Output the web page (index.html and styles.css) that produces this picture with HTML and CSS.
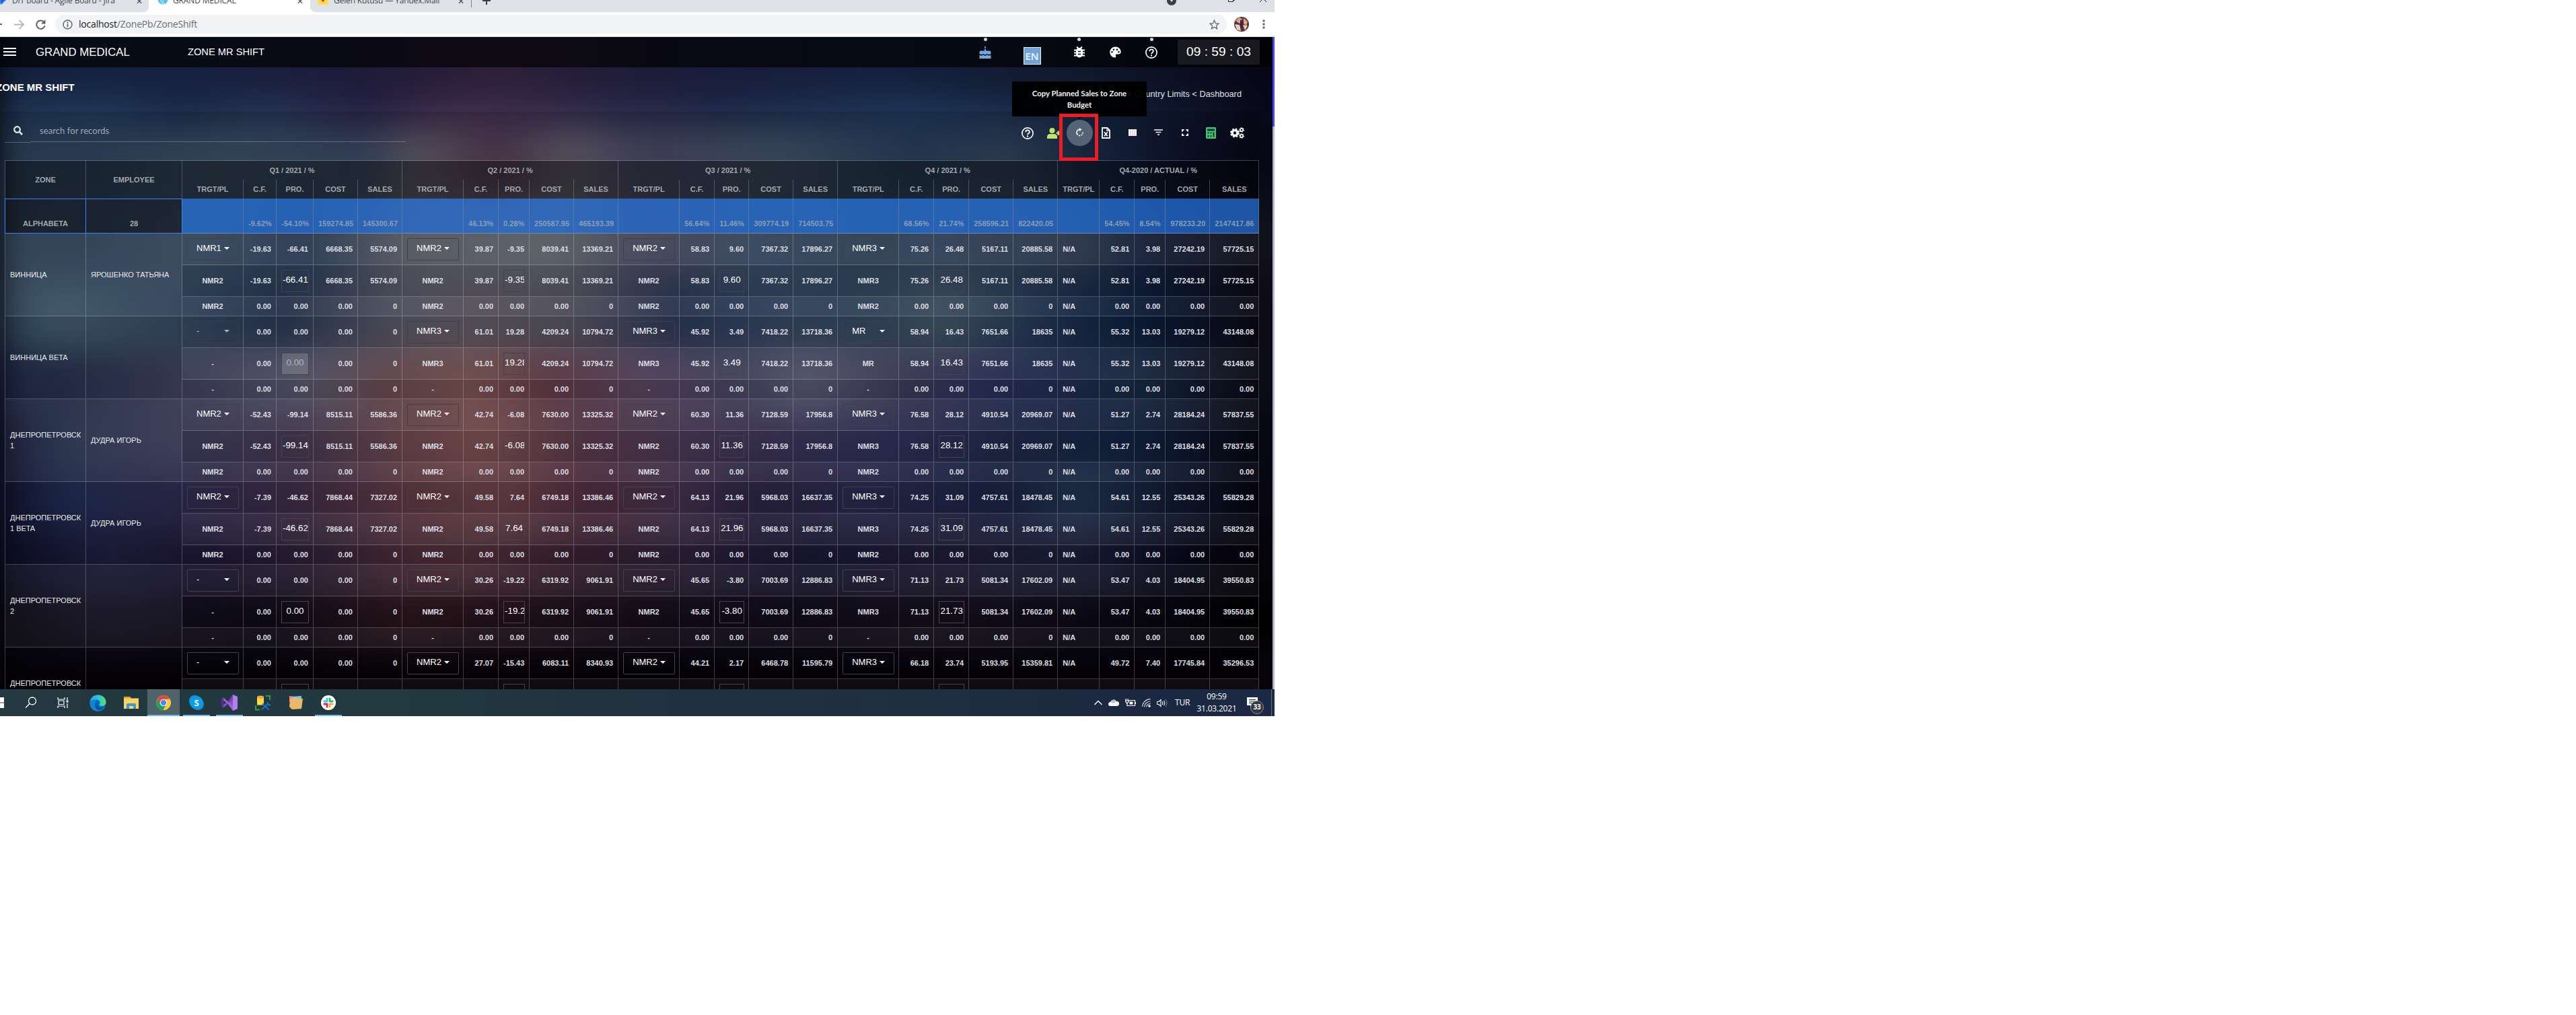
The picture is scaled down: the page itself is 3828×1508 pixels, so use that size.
FILE: index.html
```html
<!DOCTYPE html>
<html lang="ru">
<head>
<meta charset="utf-8">
<title>Grand Medical - Zone MR Shift</title>
<link rel="stylesheet" href="styles.css">
</head>
<body>
<div class="screen">
  <div class="tabs">
    <div class="tab tab-jira">
      <svg class="fav" viewBox="0 0 16 16"><path d="M8 0l8 8-8 8-8-8z" fill="#2f7cf6"/><path d="M8 3l5 5-5 5z" fill="#1d55c4"/></svg>
      <span class="tab-name">DIT board - Agile Board - Jira</span><span class="tab-x">✕</span>
    </div>
    <div class="tab tab-active">
      <svg class="fav" viewBox="0 0 16 16"><circle cx="8" cy="8" r="7.5" fill="#4fc3f7"/><path d="M4 2q-1 7 4 13M9 1q-3 7 1 14" stroke="#d5f2ff" fill="none"/></svg>
      <span class="tab-name">GRAND MEDICAL</span><span class="tab-x">✕</span>
    </div>
    <div class="tab tab-mail">
      <svg class="fav" viewBox="0 0 16 16"><path d="M0 0h16v16H0z" fill="#ffdb4d"/><path d="M4 7l4 5 4-5z" fill="#e8202a"/></svg>
      <span class="tab-name">Gelen Kutusu — Yandex.Mail</span><span class="tab-x">✕</span>
    </div>
    <div class="tab-new"><svg width="12" height="12" viewBox="0 0 12 12"><path d="M6 0v12M0 6h12" stroke="#3c4043" stroke-width="2"/></svg></div>
    <div class="win">
      <svg width="14" height="14" viewBox="0 0 14 14"><circle cx="7" cy="7" r="7" fill="#3c4043"/><path d="M4 5l3 4 3-4z" fill="#dee1e6"/></svg>
      <svg width="10" height="10" viewBox="0 0 10 10"><path d="M.5 2.500h7v7h-7zM2.500 2.500v-2h7v7h-2" fill="none" stroke="#222"/></svg>
      <svg width="10" height="10" viewBox="0 0 10 10"><path d="M0 0l10 10M10 0L0 10" stroke="#222"/></svg>
    </div>
  </div>
  <div class="addressbar">
    <span class="back"></span>
    <svg class="nav-fwd" width="15" height="15" viewBox="0 0 15 15"><path d="M0 7.500h13M7.500 1l6.500 6.500-6.500 6.500" fill="none" stroke="#b4b7ba" stroke-width="1.800"/></svg>
    <svg class="nav-reload" width="15" height="15" viewBox="0 0 15 15"><path d="M12.700 4.200A6.200 6.200 0 1 0 13.600 9" fill="none" stroke="#5f6368" stroke-width="2"/><path d="M14.500 0v6.500H8z" fill="#5f6368"/></svg>
    <div class="url">
      <svg width="15" height="15" viewBox="0 0 15 15"><circle cx="7.500" cy="7.500" r="6.500" fill="none" stroke="#5f6368" stroke-width="1.400"/><path d="M7.500 6.500v4.700M7.500 3.600v1.800" stroke="#5f6368" stroke-width="1.700"/></svg>
      <span class="url-text"><b>localhost</b>/ZonePb/ZoneShift</span>
      <svg class="star" width="15" height="15" viewBox="0 0 24 24"><path d="M12 2l3 7 7.500.700-5.700 5 1.700 7.300L12 18l-6.500 4 1.700-7.300-5.700-5L9 9z" fill="none" stroke="#5f6368" stroke-width="2"/></svg>
    </div>
    <svg class="avatar" width="22" height="22" viewBox="0 0 22 22"><circle cx="11" cy="11" r="11" fill="#5d3338"/><path d="M2 6l5-5 5 2-4 7zM14 2l6 5-2 6-4-3z" fill="#d9a68a"/><path d="M1 11l7 1 2 9-6-2zM13 12l7 1-4 7z" fill="#e6d2c0"/><path d="M9 4l4 4-1 10-3-6z" fill="#2b2c52"/></svg>
    <svg class="menu3" width="4" height="14" viewBox="0 0 4 14"><path d="M.5.500h3v3h-3zM.5 5.500h3v3h-3zM.5 10.500h3v3h-3z" fill="#5f6368"/></svg>
  </div>

  <div class="app">
    <div class="backdrop">
      <i class="b1"></i><i class="b2"></i><i class="b3"></i><i class="b4"></i><i class="b5"></i><i class="b6"></i><i class="b7"></i><i class="b8"></i><i class="b9"></i><i class="b10"></i><i class="b11"></i>
    </div>
    <header class="topbar">
      <span class="burger"></span>
      <span class="brand">GRAND MEDICAL</span>
      <span class="crumb-title">ZONE MR SHIFT</span>
      <div class="top-icons">
        <span class="ti w70 dot"><svg width="18" height="19" viewBox="0 0 18 19"><g fill="#76a7e0"><path d="M9 0q2 3 0 4.500Q7 3 9 0zM8 5h2v3H8zM2.500 7.500h13q2 0 2 2v2.500l-2.800 1.300L12 12l-3 1.500L6 12l-2.700 1.300L.500 12V9.500q0-2 2-2z"/><path d="M.500 13.700l2.800 1L6 13.500l3 1.500 3-1.500 2.700 1.200 2.800-1V19H.500z"/></g></svg></span>
        <span class="ti w69"><span class="lang">EN</span></span>
        <span class="ti w71 dot"><svg width="16" height="17" viewBox="0 0 16 17"><g stroke="#fff" stroke-width="2" fill="none"><path d="M0 5.500h16M0 9.500h16M0 13.500h16M4 .500l3 3M12 .500l-3 3"/></g><rect x="3" y="2" width="10" height="14.500" rx="5" fill="#fff"/><path d="M6 7.500h4M6 11.500h4" stroke="#080710" stroke-width="1.600"/></svg></span>
        <span class="ti w37"><svg width="17" height="17" viewBox="0 0 17 17"><path fill="#fff" fill-rule="evenodd" d="M8.500.500C4 .500.300 4 .300 8.500S4 16.500 7.500 16.500c2 0 2-1.500 1.500-2.500s0-2.500 1.500-2.500H13c2 0 3.700-1 3.700-3.500C16.700 4 13 .500 8.500.500zM3.500 9.500a1.300 1.300 0 1 1 0-2.600 1.300 1.300 0 0 1 0 2.600zm2.500-3.500a1.300 1.300 0 1 1 0-2.600 1.300 1.300 0 0 1 0 2.600zm5 0a1.300 1.300 0 1 1 0-2.600 1.300 1.300 0 0 1 0 2.600zm2.500 3.500a1.300 1.300 0 1 1 0-2.600 1.300 1.300 0 0 1 0 2.600z"/></svg></span>
        <span class="ti w70 dot"><svg width="18" height="18" viewBox="0 0 18 18"><circle cx="9" cy="9" r="8.100" fill="none" stroke="#fff" stroke-width="1.700"/><path d="M6.200 7.200c0-3.800 5.700-3.700 5.700-.200 0 2-2.900 2-2.900 4.300" fill="none" stroke="#fff" stroke-width="1.800"/><path d="M8 12.400h2v2H8z" fill="#fff"/></svg></span>
        <span class="clock">09 : 59 : 03</span>
      </div>
    </header>

    <div class="titleband">
      <h1>ZONE MR SHIFT</h1>
      <span class="crumbs">&lt; Country Limits &lt; Dashboard</span>
    </div>

    <main class="card">
      <div class="toolbar">
        <span class="s-icon"><svg width="14" height="14" viewBox="0 0 14 14"><circle cx="5.500" cy="5.500" r="4.300" fill="none" stroke="#e6e9ee" stroke-width="2.200"/><path d="M8.700 8.700l4.300 4.300" stroke="#e6e9ee" stroke-width="2.600"/></svg></span>
        <span class="s-field">search for records</span>
        <div class="tools">
          <span><svg width="18" height="18" viewBox="0 0 18 18"><circle cx="9" cy="9" r="8.100" fill="none" stroke="#fff" stroke-width="1.700"/><path d="M6.200 7.200c0-3.800 5.700-3.700 5.700-.200 0 2-2.900 2-2.900 4.300" fill="none" stroke="#fff" stroke-width="1.800"/><path d="M8 12.400h2v2H8z" fill="#fff"/></svg></span>
          <span><svg width="20" height="16" viewBox="0 0 20 16"><g fill="#c0e46c"><circle cx="7.500" cy="4" r="4"/><path d="M0 16v-2.500Q0 9 4.500 9h6q4.500 0 4.500 4.500V16zM13.500 6.500h6.500v2.300h-6.500z"/><path d="M15.600 4.500h2.200v6.500h-2.200z"/></g></svg></span>
          <span class="active"><svg width="13" height="13" viewBox="0 0 13 13"><path d="M6.500 2.300A4.500 4.500 0 0 0 3.800 10.400" fill="none" stroke="#fff" stroke-width="1.500"/><path d="M5 11.200a4.500 4.500 0 0 0 5.900-5.600" fill="none" stroke="#fff" stroke-width="1.500" stroke-dasharray="2.200 1.300"/><path d="M6 0l3.500 2.600L6 5.200z" fill="#fff"/></svg></span>
          <span><svg width="13" height="17" viewBox="0 0 13 17"><path d="M1 1h7.500l3.500 3.500V16H1z" fill="none" stroke="#fff" stroke-width="1.800"/><path d="M8 1v4h4" fill="none" stroke="#fff" stroke-width="1.300"/><path d="M4 7.200l4.800 6M8.800 7.200l-4.800 6" stroke="#fff" stroke-width="1.800"/></svg></span>
          <span><svg class="up" width="12" height="10" viewBox="0 0 12 10"><path d="M0 0h12v10H0z" fill="#fff"/><path d="M3.500 0v10M6.500 0v10M9.500 0v10" stroke="#d7a9b5" stroke-width=".9"/></svg></span>
          <span><svg class="up" width="13" height="9" viewBox="0 0 13 9"><path d="M0 1h13M2.500 4.500h8M5 8h3" stroke="#fff" stroke-width="1.500"/></svg></span>
          <span><svg class="up" width="10" height="10" viewBox="0 0 10 10"><path d="M1 3.500V1h2.500M6.500 1H9v2.500M9 6.500V9H6.500M3.500 9H1V6.500" fill="none" stroke="#fff" stroke-width="2"/></svg></span>
          <span><svg width="15" height="17" viewBox="0 0 15 17"><rect width="15" height="17" rx="1.500" fill="#45c26b"/><path d="M2 2.500h11v3H2zM2.500 7.500h2v2h-2zM6.500 7.500h2v2h-2zM10.500 7.500h2v7h-2zM2.500 12h2v2.500h-2zM6.500 12h2v2.500h-2z" fill="#15313a"/></svg></span>
          <span><svg width="21" height="17" viewBox="0 0 21 17"><g fill="none" stroke="#fff"><circle cx="7" cy="8.500" r="3.900" stroke-width="3.400"/><circle cx="7" cy="8.500" r="6" stroke-width="2" stroke-dasharray="2.700 2.010"/><circle cx="17" cy="4" r="2.100" stroke-width="1.700"/><circle cx="17" cy="4" r="3.200" stroke-width="1.200" stroke-dasharray="1.600 1.750"/><circle cx="17" cy="13" r="2.100" stroke-width="1.700"/><circle cx="17" cy="13" r="3.200" stroke-width="1.200" stroke-dasharray="1.600 1.750"/></g></svg></span>
        </div>
      </div>
      <table class="shift">
        <colgroup id="cols"></colgroup>
        <thead id="head"></thead>
        <tbody id="rows"></tbody>
      </table>
    </main>
    <div class="tooltip">Copy Planned Sales to Zone<br>Budget</div>
    <div class="marker"></div>
    <div class="scrollbar"></div>
  </div>

  <footer class="taskbar">
    <span class="tk start"><svg width="6" height="16" viewBox="0 0 6 16"><path d="M0 0h6v7.500H0zM0 8.500h6V16H0z" fill="#fff"/></svg></span>
    <span class="tk"><svg width="18" height="18" viewBox="0 0 18 18"><circle cx="11" cy="6.500" r="5.500" fill="none" stroke="#fff" stroke-width="1.300"/><path d="M7 10.500L1 16.500" stroke="#fff" stroke-width="1.400"/></svg></span>
    <span class="tk view"><svg width="17" height="16" viewBox="0 0 17 16"><path d="M1 0v3h10V0M2 5h8v5.500H2zM1 16v-3h10v3M15 0v4M15 9v7" fill="none" stroke="#fff" stroke-width="1.200"/><path d="M13.500 4.500h3v3h-3z" fill="#fff"/></svg></span>
    <span class="tk wide"><svg width="25" height="25" viewBox="0 0 25 25"><defs><linearGradient id="eg" x1="0" x2="1"><stop offset="0" stop-color="#2aa6ea"/><stop offset=".6" stop-color="#2fc8cf"/><stop offset="1" stop-color="#66e055"/></linearGradient></defs><circle cx="12.500" cy="12.500" r="12" fill="#0b68b8"/><path d="M.500 12C1 4 7 0 13 .500c7 .500 11.500 5 11.500 10.500 0 4-3 6-6.500 6s-4-1.500-3-3c2-3-1-6.500-5-6.500C5 7.500 1 9 .500 12z" fill="url(#eg)"/><path d="M.600 11C3 7 9 7 11 9c-4 2-3 10 3 12 4 1 7-.500 9-2-3 5-8 6-12 5.500C4 24 0 18 .600 11z" fill="#1184d8"/><path d="M10 12c-1 5 4 10 12 7-2 2-4 4-8 4-6-1-7-8-4-11z" fill="#0c4f93"/></svg></span>
    <span class="tk folder"><svg width="22" height="18" viewBox="0 0 22 18"><path d="M0 0h9l2 2.500h11V18H0z" fill="#fcd462"/><path d="M0 0h9l1 2.500H0z" fill="#e0a30c"/><path d="M4 18v-6.500Q4 10 5.500 10h11Q18 10 18 11.500V18h-4v-4H8v4z" fill="#3a99dc"/></svg></span>
    <span class="tk chrome on"><svg width="22" height="22" viewBox="0 0 22 22"><circle cx="11" cy="11" r="11" fill="#fbc42c"/><path d="M1.500 5.500A11 11 0 0 1 20.500 5.500L11 6l-4.500 7.500z" fill="#dd4b3e"/><path d="M1.500 5.500L6.300 13.700 15.500 13.500 10.500 22A11 11 0 0 1 1.500 5.500z" fill="#1fa15d"/><path d="M11 6h9.500A11 11 0 0 1 10.500 22l5-8.500z" fill="#fdcb3c"/><circle cx="11" cy="11" r="5.200" fill="#fff"/><circle cx="11" cy="11" r="4.200" fill="#4a87f0"/></svg></span>
    <span class="tk on skype"><svg width="22" height="22" viewBox="0 0 22 22"><rect width="17" height="17" rx="8" fill="#0b96e4"/><rect x="5" y="5" width="17" height="17" rx="8" fill="#0b86d8"/><circle cx="11" cy="11" r="9.800" fill="#0a9ce8"/></svg><em>S</em></span>
    <span class="tk on gap"><svg width="24" height="24" viewBox="0 0 24 24"><path d="M0 6l3-1.500L18 18V6L6 17l-3 2.500L0 18z" fill="#8b54c8"/><path d="M0 6v12l3 1.500V4.500z" fill="#5c2d91"/><path d="M3 19.500L17 0v7.500L5 17.500z" fill="#7a3fb5"/><path d="M3 4.500L17 16.500V24L5 8z" fill="#9a62da"/><path d="M17 0l7 3v18l-7 3z" fill="#b17ef0"/><path d="M3 9l4 3-4 3z" fill="#22383f"/></svg></span>
    <span class="tk gap"><svg width="23" height="23" viewBox="0 0 23 23"><path d="M3 2.500h10v12H3z" fill="#ffd93d"/><ellipse cx="8" cy="2.800" rx="5" ry="2.300" fill="#e9a85b"/><path d="M16 1h6v6M7 21.500H1V15" fill="none" stroke="#3c9a3c" stroke-width="2"/><path d="M10 21l9-8M11 12.500l9.500 9M18 11l2 3 3 1" stroke="#1673c4" stroke-width="2.200" fill="none"/></svg></span>
    <span class="tk gap"><svg width="21" height="20" viewBox="0 0 21 20"><path d="M1 0l8 1-2 9-6-1z" fill="#f08a96"/><path d="M5 1l14-1-1 16-12 1z" fill="#7cc9e8"/><path d="M2 5l5-2 14 1-2 15-14 1L1 16z" fill="#e9b868"/></svg></span>
    <span class="tk on gap"><svg width="22" height="22" viewBox="0 0 22 22"><circle cx="11" cy="11" r="11" fill="#fff"/><g stroke-width="2.800" stroke-linecap="round"><path d="M9 5v4M4.800 9H9" stroke="#36c5f0"/><path d="M13 4.800V9M13 9h4.200" stroke="#2eb67d"/><path d="M13 13v4.200M13 13h4.200" stroke="#ecb22e"/><path d="M9 13v4.200M4.800 13H9" stroke="#e01e5a"/></g></svg></span>
    <div class="tray">
      <svg width="12" height="8" viewBox="0 0 12 8"><path d="M.5 7L6 1.500 11.500 7" fill="none" stroke="#fff" stroke-width="1.300"/></svg>
      <svg width="16" height="10" viewBox="0 0 16 10"><path d="M3 10a3 3 0 0 1 0-6 5 5 0 0 1 9-1 3.500 3.500 0 0 1 1 7z" fill="#fff"/><path d="M3 4a5 5 0 0 1 9-1L8 6z" fill="#b9c0ca"/></svg>
      <svg width="16" height="12" viewBox="0 0 16 12"><path d="M5 2.500h9.500v8H3V7M15.500 5v3M1 0v3M4 0v3M0 3h5v2L2.500 7z" fill="none" stroke="#fff" stroke-width="1.200"/><path d="M6.500 4.500h5v4h-5z" fill="#fff"/></svg>
      <svg width="13" height="13" viewBox="0 0 13 13"><g fill="none" stroke="#cdd3dc" stroke-width="1.200"><path d="M.5 12A12 12 0 0 1 12.500.700M3.500 12.500A9 9 0 0 1 12.500 4M6.500 12.500A6 6 0 0 1 12.500 7.300"/></g><circle cx="11" cy="11" r="1.700" fill="#fff"/></svg>
      <svg width="16" height="13" viewBox="0 0 16 13"><path d="M.5 4.500h2.500L6 1.500v10L3 8.500H.5zM8 4q2 2.500 0 5M10.500 3q2.500 3.500 0 7" fill="none" stroke="#fff" stroke-width="1.100"/><path d="M13 1q4 5.500 0 11" fill="none" stroke="#7d8797"/></svg>
      <span class="lng">TUR</span>
      <span class="when">09:59<br>31.03.2021</span>
      <span class="note"><svg width="16" height="16" viewBox="0 0 16 16"><path d="M0 0h16v12H8l-3 3v-3H0z" fill="#fff"/><path d="M3 3.500h10M3 6h10M3 8.500h7" stroke="#1c2842"/></svg><i>33</i></span>
    </div>
  </footer>
</div>
<script src="app.js"></script>
</body>
</html>
```
FILE: styles.css
```css
* { box-sizing: border-box; }
body { margin: 0; background: #fff; font-family: "Liberation Sans", Arial, sans-serif; }
svg { display: block; flex: none; }
.screen { width: 1894px; height: 1064px; display: flex; flex-direction: column; overflow: hidden; }

/* browser frame */
.tabs { height: 18px; flex: none; display: flex; background: #fff; font: 12px/16px "Open Sans", sans-serif; color: #45494d; overflow: hidden; }
.tab { height: 18px; display: flex; align-items: flex-start; background: #dee1e6; }
.tab .fav { width: 16px; height: 16px; margin-top: -9px; }
.tab-name { margin-top: -7px; white-space: nowrap; letter-spacing: -.15px; }
.tab-x { margin: -6px 0 0 auto; font: 12px/16px "DejaVu Sans", sans-serif; }
.tab-jira { width: 221px; padding-right: 9px; border-radius: 0 0 8px 0; }
.tab-jira .fav { margin-left: -6px; }
.tab-jira .tab-name { margin-left: 8px; }
.tab-active { width: 240px; background: #fff; padding: 0 10px 0 13px; }
.tab-active .tab-name { margin-left: 7px; }
.tab-mail { width: 240px; padding: 0 11px; border-radius: 0 0 0 8px; }
.tab-mail .tab-name { margin-left: 8px; }
.tab-new { width: 43px; background: linear-gradient(#80868b, #80868b) 0 0 / 1px 11px no-repeat #dee1e6; padding: 0 0 0 17px; margin-left: -1px; }
.tab-new svg { margin-top: -5px; }
.win { flex: 1; background: #dee1e6; display: flex; justify-content: flex-end; padding-right: 12px; }
.win svg:nth-child(1) { margin: -6px 77px 0 0; }
.win svg:nth-child(2) { margin: -7px 37px 0 0; }
.win svg:nth-child(3) { margin: -7px 0 0 0; }
.addressbar { height: 37px; flex: none; display: flex; align-items: center; background: #fff; border-bottom: 1px solid #d4d6d9; }
.back { width: 3px; height: 2px; background: #5f6368; }
.nav-fwd { margin-left: 18px; }
.nav-reload { margin-left: 17px; }
.url { flex: 1; height: 28px; margin-left: 14px; border-radius: 14px; background: #f1f3f4; display: flex; align-items: center; padding: 0 11px; }
.url-text { margin-left: 9px; font: 14px/20px "Open Sans", sans-serif; letter-spacing: -.2px; color: #6a6e73; }
.url-text b { font-weight: 400; color: #202124; }
.star { margin-left: auto; }
.avatar { margin-left: 11px; }
.menu3 { margin: 0 14px 0 20px; }

/* application */
.app { position: relative; height: 969px; flex: none; overflow: hidden; background: #08060d; isolation: isolate; }
.backdrop { position: absolute; inset: -75px -60px -60px 0; z-index: -1; display: flex; flex-direction: column; filter: blur(24px); }
.backdrop i { display: block; margin: 0 0 0 -60px; padding-left: 60px; background-origin: content-box; background-repeat: no-repeat; flex: none; height: 90px; }
.backdrop .b1 { height: 160px; background-image: linear-gradient(90deg, #12203a 0, #15213e 270px, #1d1b38 540px, #2c1f38 740px, #1b1b37 980px, #14203c 1300px, #10172a 1620px, #060515 1890px); }
.backdrop .b2 { height: 50px; background-image: linear-gradient(90deg, #1d3252 0, #1f3857 150px, #182848 270px, #243253 400px, #251f42 540px, #412c4c 700px, #2a2848 900px, #1b2848 1080px, #1c3558 1350px, #15243f 1620px, #070818 1890px); }
.backdrop .b3 { height: 105px; background-image: linear-gradient(90deg, #2e415c 0, #2f445c 150px, #394e62 340px, #374661 540px, #5e5966 620px, #4f394f 740px, #5f5b68 850px, #484662 950px, #3f5064 1150px, #283c58 1350px, #304158 1500px, #152440 1650px, #0e132b 1750px, #080815 1870px); }
.backdrop .b4 { height: 120px; background-image: linear-gradient(90deg, #33475f 0, #31455e 100px, #3c5067 300px, #2d405c 460px, #5f626d 600px, #616a72 830px, #4d4c62 950px, #3b4e68 1120px, #32475f 1300px, #374863 1400px, #2e3c53 1600px, #172340 1700px, #100f1b 1870px); }
.backdrop .b5 { height: 105px; background-image: linear-gradient(90deg, #31475f 0, #445f72 80px, #374c65 270px, #293854 420px, #5b5c6b 600px, #625b66 700px, #585664 850px, #2b3859 1010px, #364764 1150px, #354a62 1300px, #435867 1400px, #233655 1550px, #0c1e3c 1700px, #0c0a15 1870px); }
.backdrop .b6 { background-image: linear-gradient(90deg, #242e52 0, #29324f 100px, #444562 300px, #595a70 450px, #6a4b50 580px, #7d5453 700px, #623a47 820px, #5b4662 950px, #474864 1100px, #5b5d74 1200px, #3d3b5a 1350px, #28305b 1500px, #192a45 1700px, #0b0a16 1870px); }
.backdrop .b7 { background-image: linear-gradient(90deg, #15193a 0, #2b3754 100px, #3f405f 270px, #473a54 450px, #704a50 600px, #805353 720px, #5d3b4c 860px, #4c3b57 1000px, #3d3659 1150px, #33335c 1300px, #212b4b 1500px, #122240 1700px, #080713 1870px); }
.backdrop .b8 { background-image: linear-gradient(90deg, #131632 0, #222e55 100px, #2f2b50 270px, #3f2d47 450px, #603a44 600px, #6b424a 750px, #522e40 870px, #48334e 1000px, #2d2544 1100px, #29294e 1300px, #1a2343 1500px, #243654 1600px, #111a32 1750px, #060510 1870px); }
.backdrop .b9 { background-image: linear-gradient(90deg, #0d0f28 0, #1f2040 150px, #1e1834 300px, #2b2037 450px, #4b2c39 600px, #51303b 700px, #392130 850px, #2d2139 1000px, #1a1934 1200px, #211d37 1400px, #1b1f39 1600px, #0a0a1e 1750px, #040307 1870px); }
.backdrop .b10 { background-image: linear-gradient(90deg, #080812 0, #151124 150px, #0f0b18 400px, #2b161d 600px, #24121c 750px, #190f1a 900px, #100c1b 1100px, #160f1c 1400px, #0e0b1a 1600px, #020203 1870px); }
.backdrop .b11 { height: 160px; background: #050308; }

.topbar { height: 45px; display: flex; align-items: center; background: rgba(0, 0, 0, .64); color: #fff; padding: 0 22px 0 5px; }
.burger { width: 19px; height: 12px; margin-top: -1px; background: linear-gradient(#fff 0 2px, transparent 2px 5px, #fff 5px 7px, transparent 7px 10px, #fff 10px); }
.brand { margin-left: 29px; width: 226px; font-size: 16.800px; line-height: 20px; }
.crumb-title { font-size: 14.670px; line-height: 20px; margin-top: -1px; }
.top-icons { margin-left: auto; display: flex; align-items: center; height: 45px; }
.ti { position: relative; height: 45px; display: flex; align-items: center; justify-content: center; }
.dot::before { content: ""; position: absolute; top: 1px; left: calc(50% - 2.500px); width: 5px; height: 5px; border-radius: 50%; background: #d6d7dc; }
.w70 { width: 70px; } .w69 { width: 69px; } .w71 { width: 71px; } .w37 { width: 37px; }
.lang { width: 26px; height: 26px; margin-top: 11px; border: 1px solid #e8f0fa; background: #6fa3dc; color: #eef5fd; font: 600 15px/25px "Open Sans", sans-serif; text-align: center; }
.clock { width: 122px; height: 37px; margin-left: 4px; border-radius: 2px; background: rgba(255, 255, 255, .09); font-size: 19.200px; line-height: 36px; text-align: center; }

.titleband { height: 66px; display: flex; justify-content: space-between; color: #fff; padding-right: 49px; }
.titleband h1 { margin: 20px 0 0 -6px; font-size: 15px; line-height: 20px; font-weight: 700; }
.crumbs { margin-top: 30px; font-size: 12.800px; line-height: 20px; color: #dfe1e6; }

.card { width: 1872px; height: 858px; background: rgba(0, 0, 0, .12); padding-left: 7px; }
.toolbar { height: 72px; display: flex; align-items: flex-start; }
.s-icon { width: 39px; height: 46px; border-bottom: 1px solid rgba(255, 255, 255, .25); padding: 21px 0 0 13px; }
.s-field { width: 557px; height: 45px; border-bottom: 1px solid rgba(255, 255, 255, .25); padding: 18px 0 0 13px; font: 13px/20px Lato, sans-serif; letter-spacing: .08px; color: #a0a8b5; }
.tools { margin: 12px 0 0 auto; padding-right: 14px; display: flex; }
.tools span { width: 39px; height: 39px; display: flex; align-items: center; justify-content: center; border-radius: 50%; }
.tools .active { background: #566276; }
.tools .active svg { margin-top: -3px; }
.tools .up { margin-top: -2px; }

.shift { width: 1864px; table-layout: fixed; border-collapse: separate; border-spacing: 0; border: 1px solid rgba(255, 255, 255, .22); border-width: 1px 0 0 1px; font-size: 11px; line-height: 16px; color: #dcdee3; }
.shift th, .shift td { padding: 0 7px; border-right: 1px solid rgba(255, 255, 255, .22); border-bottom: 1px solid rgba(255, 255, 255, .22); text-align: right; font-weight: 700; white-space: nowrap; }
.shift thead th { height: 28px; padding: 0; background: rgba(0, 0, 0, .38); color: #a3a7af; text-align: center; border-bottom: 0; }
.shift .total td { height: 52px; padding-top: 22px; background: rgba(36, 112, 218, .72); color: rgba(158, 168, 184, .85); border-color: rgba(120, 130, 150, .6); border-bottom-color: rgba(160, 165, 170, .6); }
.shift .total .corner { background: rgba(0, 0, 0, .42); color: #a3a7af; text-align: center; border-color: #3b82f6; box-shadow: inset 0 1px #3b82f6, -1px 0 #3b82f6; }
.shift .tall td { height: 47px; }
.shift .low td { height: 29px; }
.shift .shade td { background: rgba(255, 255, 255, .045); }
.shift .plain td { background: rgba(0, 0, 0, .05); }
.shift .name { font-weight: 400; text-align: left; white-space: normal; color: #e8eaee; }
.shift .mid { text-align: center; }
.shift .left { text-align: left; }
.shift .picker { padding: 0 6px 0 7px; }
.pick { height: 33px; border: 1px solid #3e4149; border-radius: 2px; display: flex; align-items: center; justify-content: space-between; padding: 0 13px 2px; font-size: 13px; font-weight: 400; color: #fff; }
.pick::after { content: ""; border: 4px solid transparent; border-top-color: currentColor; border-bottom: 0; }
.pick.off { opacity: .6; }
.shift .field { padding: 0 6px 0 7px; }
.edit { height: 33px; border: 1px solid #46414b; padding: 0 1px 2px; display: flex; align-items: center; justify-content: safe center; overflow: hidden; font-size: 13.330px; font-weight: 400; color: #fff; }
.edit.off { background: rgba(255, 255, 255, .16); color: rgba(255, 255, 255, .5); }

.tooltip { position: absolute; left: 1504px; top: 66px; width: 200px; height: 52px; border-radius: 2px; background: rgba(0, 0, 0, .96); color: #f0f0f0; font: 700 11.400px/17px Lato, sans-serif; text-align: center; padding-top: 9px; }
.tooltip::after { content: ""; position: absolute; left: 96px; top: 52px; border: 4px solid transparent; border-top-color: #000; border-bottom: 0; }
.marker { position: absolute; left: 1574px; top: 114px; width: 58px; height: 70px; border: 5px solid #ee1c24; }
.scrollbar { position: absolute; left: 1891px; top: 0; width: 3px; height: 969px; background: linear-gradient(#4747ee 133px, #b3b6c4 133px); }

/* taskbar */
.taskbar { height: 40px; flex: none; display: flex; background: linear-gradient(90deg, #233840 0, #22393f 600px, #20333f 900px, #1f2f40 1250px, #1e3040 1350px, #1b2740 1700px, #1c2a45 1894px); }
.tk { position: relative; width: 40px; height: 40px; display: flex; align-items: center; justify-content: center; }
.tk.start { width: 26px; justify-content: flex-start; }
.tk.view { width: 54px; padding-right: 0; }
.tk.wide { width: 50px; }
.tk.folder { width: 49px; }
.tk.chrome { width: 48px; background: #4f636b; }
.on::after { content: ""; position: absolute; left: 0; right: 0; bottom: 0; height: 2px; background: #76b9ed; }
.skype { margin-left: 5px; }
.skype em { position: absolute; font: 700 13px/20px "Open Sans", sans-serif; color: #fff; }
.gap { margin-left: 9px; }
.tray { margin-left: auto; display: flex; align-items: center; color: #fff; font: 12px/18px "Open Sans", sans-serif; letter-spacing: -.2px; border-right: 1px solid #66718a; padding-right: 11px; margin-right: 4px; }
.tray svg { margin-right: 9px; }
.lng { margin-left: 2px; width: 30px; }
.when { width: 64px; text-align: center; }
.note { position: relative; width: 25px; height: 16px; margin-left: 13px; margin-top: -1px; }
.note i { position: absolute; left: 5px; top: 5px; width: 20px; height: 20px; border: 1px solid #8b8f96; border-radius: 50%; background: #33383e; font: 700 10px/17px "Open Sans", sans-serif; text-align: center; }
```
FILE: app.js
```js
const edges = [7, 127, 270, 361, 410, 465, 531, 597, 688, 740, 786, 852, 918, 1009, 1061, 1112, 1178, 1244, 1335, 1387, 1439, 1505, 1571, 1633, 1685, 1731, 1797, 1870];
const periods = ['Q1 / 2021 / %', 'Q2 / 2021 / %', 'Q3 / 2021 / %', 'Q4 / 2021 / %', 'Q4-2020 / ACTUAL / %'];
const totals = [
  ['-9.62%', '-54.10%', '159274.85', '145300.67'],
  ['46.13%', '0.28%', '250587.95', '465193.39'],
  ['56.64%', '11.46%', '309774.19', '714503.75'],
  ['68.56%', '21.74%', '258596.21', '822420.05'],
  ['54.45%', '8.54%', '978233.20', '2147417.86'],
];
// quarter: [target, planned, base, c.f., pro., cost, sales]
const zones = [
  { zone: 'ВИННИЦА', who: 'ЯРОШЕНКО ТАТЬЯНА', q: [
    ['NMR1', 'NMR2', 'NMR2', '-19.63', '-66.41', '6668.35', '5574.09'],
    ['NMR2', 'NMR2', 'NMR2', '39.87', '-9.35', '8039.41', '13369.21'],
    ['NMR2', 'NMR2', 'NMR2', '58.83', '9.60', '7367.32', '17896.27'],
    ['NMR3', 'NMR3', 'NMR2', '75.26', '26.48', '5167.11', '20885.58']],
    fact: ['52.81', '3.98', '27242.19', '57725.15'] },
  { zone: 'ВИННИЦА BETA', who: '', locked: true, q: [
    ['-', '-', '-', '0.00', '0.00', '0.00', '0'],
    ['NMR3', 'NMR3', '-', '61.01', '19.28', '4209.24', '10794.72'],
    ['NMR3', 'NMR3', '-', '45.92', '3.49', '7418.22', '13718.36'],
    ['MR', 'MR', '-', '58.94', '16.43', '7651.66', '18635']],
    fact: ['55.32', '13.03', '19279.12', '43148.08'] },
  { zone: 'ДНЕПРОПЕТРОВСК<br>1', who: 'ДУДРА ИГОРЬ', q: [
    ['NMR2', 'NMR2', 'NMR2', '-52.43', '-99.14', '8515.11', '5586.36'],
    ['NMR2', 'NMR2', 'NMR2', '42.74', '-6.08', '7630.00', '13325.32'],
    ['NMR2', 'NMR2', 'NMR2', '60.30', '11.36', '7128.59', '17956.8'],
    ['NMR3', 'NMR3', 'NMR2', '76.58', '28.12', '4910.54', '20969.07']],
    fact: ['51.27', '2.74', '28184.24', '57837.55'] },
  { zone: 'ДНЕПРОПЕТРОВСК<br>1 BETA', who: 'ДУДРА ИГОРЬ', q: [
    ['NMR2', 'NMR2', 'NMR2', '-7.39', '-46.62', '7868.44', '7327.02'],
    ['NMR2', 'NMR2', 'NMR2', '49.58', '7.64', '6749.18', '13386.46'],
    ['NMR2', 'NMR2', 'NMR2', '64.13', '21.96', '5968.03', '16637.35'],
    ['NMR3', 'NMR3', 'NMR2', '74.25', '31.09', '4757.61', '18478.45']],
    fact: ['54.61', '12.55', '25343.26', '55829.28'] },
  { zone: 'ДНЕПРОПЕТРОВСК<br>2', who: '', q: [
    ['-', '-', '-', '0.00', '0.00', '0.00', '0'],
    ['NMR2', 'NMR2', '-', '30.26', '-19.22', '6319.92', '9061.91'],
    ['NMR2', 'NMR2', '-', '45.65', '-3.80', '7003.69', '12886.83'],
    ['NMR3', 'NMR3', '-', '71.13', '21.73', '5081.34', '17602.09']],
    fact: ['53.47', '4.03', '18404.95', '39550.83'] },
  { zone: 'ДНЕПРОПЕТРОВСК<br>&nbsp;', who: '', partial: true, q: [
    ['-', '', '', '0.00', '0.00', '0.00', '0'],
    ['NMR2', '', '', '27.07', '-15.43', '6083.11', '8340.93'],
    ['NMR2', '', '', '44.21', '2.17', '6468.78', '11595.79'],
    ['NMR3', '', '', '66.18', '23.74', '5193.95', '15359.81']],
    fact: ['49.72', '7.40', '17745.84', '35296.53'] },
];

const td = (text, cls = '', attr = '') => `<td class="${cls}" ${attr}>${text}</td>`;
document.getElementById('cols').innerHTML =
  edges.slice(1).map((x, i) => `<col style="width:${x - edges[i]}px">`).join('');

document.getElementById('head').innerHTML =
  '<tr><th rowspan="2">ZONE</th><th rowspan="2">EMPLOYEE</th>' +
  periods.map(p => `<th colspan="5">${p}</th>`).join('') + '</tr><tr>' +
  periods.map(() => ['TRGT/PL', 'C.F.', 'PRO.', 'COST', 'SALES'].map(h => `<th>${h}</th>`).join('')).join('') + '</tr>';

let html = '<tr class="total">' + td('ALPHABETA', 'corner') + td('28', 'corner') +
  totals.map(t => td('') + t.map(v => td(v)).join('')).join('') + '</tr>';
let n = 0;
const open = size => `<tr class="${size} ${n++ % 2 ? 'plain' : 'shade'}">`;

for (const z of zones) {
  const off = i => (z.locked && i === 0 ? ' off' : '');
  html += open('tall') + td(z.zone, 'name', 'rowspan="3"') + td(z.who, 'name', 'rowspan="3"');
  z.q.forEach((q, i) => {
    html += td(`<div class="pick${off(i)}">${q[0]}</div>`, 'picker') + q.slice(3).map(v => td(v)).join('');
  });
  html += td('N/A', 'left') + z.fact.map(v => td(v)).join('') + '</tr>' + open('tall');
  z.q.forEach((q, i) => {
    const v = z.partial ? ['', '', '', ''] : q.slice(3);
    html += td(q[1], 'mid') + td(v[0]) + td(`<div class="edit${off(i)}">${v[1]}</div>`, 'field') + td(v[2]) + td(v[3]);
  });
  html += (z.partial ? td('').repeat(5) : td('N/A', 'left') + z.fact.map(v => td(v)).join('')) + '</tr>' + open('low');
  z.q.forEach(q => {
    html += td(q[2], 'mid') + (z.partial ? td('').repeat(4) : td('0.00').repeat(3) + td('0'));
  });
  html += (z.partial ? td('').repeat(5) : td('N/A', 'left') + td('0.00').repeat(4)) + '</tr>';
}
document.getElementById('rows').innerHTML = html;
```
